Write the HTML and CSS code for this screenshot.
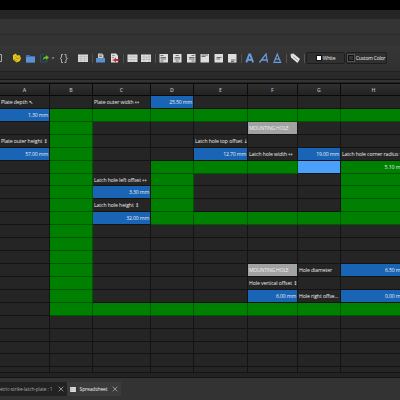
FILE: index.html
```
<!DOCTYPE html>
<html lang="en">
<head>
<meta charset="utf-8">
<title>Spreadsheet</title>
<link rel="stylesheet" href="styles.css">
</head>
<body>
<div class="app">
<div class="screen-top"></div>
<div class="menu"></div>
<div class="strip"></div>
<div class="toolbar">
<svg class="icons" width="306" height="26" viewBox="0 45 306 26">
  <path d="M0 54.500h1.500v7H0" fill="none" stroke="#aaa"/>
  <path d="M13 55l3-1.500 1 2 2.500-.5 1.500 3-1 3-3.500 1.500-3.500-3z" fill="#e6c71c"/><path d="M15.500 56l1.500 3 3-1.500M14 59l3 2" fill="none" stroke="#9a8210" stroke-width=".7"/>
  <path d="M26 55h3.500l1 1H35v6.500h-9z" fill="#3d73b5"/><path d="M26 57h9v5.500h-9z" fill="#5b92d6"/>
  <path d="M44 54.500h-3.500v7.500h6.500v-2" fill="none" stroke="#29506b"/><path d="M43 60c0-2.500 1.500-3.500 3-3.500V55l3 2.500-3 2.500v-1.500c-1.500 0-2 .5-3 1.500z" fill="#63c625"/>
  <path d="M51.500 57.500h3l-1.500 1.500z" fill="#aaa"/>
  <path d="M63 54.500h-1.500v3l-1.500 1 1.500 1v3H63M64.500 54.500H66v3l1.500 1-1.500 1v3h-1.500" fill="none" stroke="#bbb" stroke-width=".9"/>
  <path d="M78 54.500h10v7.500H78z" fill="#dedede"/><path d="M78 56.500h10M78 58.300h10M78 60.200h10M81 54.500v7.500M84.500 54.500v7.500" stroke="#aaa" stroke-width=".5"/>
  <path d="M92.500 54v9M123.500 54v9M155.500 54v9M241.500 54v9" stroke="#555" stroke-width=".8"/><path d="M286.500 54v9M304.500 54v9" stroke="#635b4d" stroke-width=".8"/>
  <path d="M98 53.500h4l1.500 1.500v4H98z" fill="#ccc"/><path d="M99 55h3M99 56.500h3" stroke="#555" stroke-width=".6"/><path d="M96 58h9v4.500h-9z" fill="#5b8fce"/>
  <path d="M111 53.500h5l2 2v7h-7z" fill="#dedede"/><path d="M112 55.500h3M112 57.500h2M112 60h2" stroke="#777" stroke-width=".7"/><path d="M113 60l3-2.500v1.500h2.500v2H116v1.500z" fill="#c22b3d"/>
  <path d="M127.500 54.500h10v7.500h-10zM141 54.500h10v7.500h-10z" fill="#dedede"/><path d="M127.500 57h10M127.500 59.500h10M131 54.500v2.500M134 54.500v2.500M131 59.500v2.500M134 59.500v2.500M141 57h10M141 59.500h10M144 54.500v7.500M146.500 57v2.500M149 54.500v7.500" stroke="#aaa" stroke-width=".6"/>
  <path d="M159.500 54h8.500v8.500h-8.500zM173 54h8.500v8.500H173zM187 54h8.500v8.500H187zM200.500 54h8.500v8.500h-8.500zM214.500 54h8.500v8.500h-8.500zM228 54h8.500v8.500H228z" fill="#dedede"/>
  <path d="M160.500 55.500h3M160.500 57.500h5.500M160.500 59h5.500M160.500 61h3M175.700 55.500h3M174.500 57.500h5.500M174.500 59h5.500M175.700 61h3M191.500 55.500h3M189 57.500h5.500M189 59h5.500M191.500 61h3M201.500 55h6.500M201.500 56.500h4M216.500 57.500h5M216.500 59h3.500M231 60h4.500M231 61.500h3" stroke="#707070" stroke-width="1"/>
  <g fill="none" stroke="#6b9bdc"><path d="M246.300 62.300L249.200 54.500h1l2.900 7.800M247.500 59.700h4.500" stroke-width="1.900"/><path d="M259.500 62.500l6.500-8.500 1.500 8.500M262 60h5" stroke-width="1.300"/><path d="M274.300 61.500l3-7.500 3 7.500M275.300 59.200h4M273.300 62.400h8" stroke-width="1.200"/></g>
  <path d="M290.500 54l3-.5 6.500 5.500-2.500 4-6.500-5.500z" fill="#e4e4e0"/><path d="M293 56.500l5 4M292 54.500l.8.800" stroke="#777" stroke-width=".7"/>
</svg>
<div class="pick white"><i class="swatch lit"></i><span>White</span></div>
<div class="pick custom"><i class="swatch"></i><span>Custom Color</span></div>
</div>
<div class="formula"></div>
<div class="heads"><b>A</b><b>B</b><b>C</b><b>D</b><b>E</b><b>F</b><b>G</b><b>H</b></div>
<div class="sheet" id="cells"></div>
<div class="scroll"></div>
<div class="tabs">
  <div class="tab first"><span>etric-strike-latch-plate : 1</span><svg width="6" height="6" viewBox="0 0 6 6"><path d="M.7.7l4.600 4.600M5.300.7L.7 5.300"/></svg></div>
  <div class="tab active"><svg class="mini" width="6" height="5" viewBox="0 0 7 6"><path class="page" d="M0 0h7v6H0z"/><path class="rule" d="M2 0v6M0 2h7M0 4h7"/></svg><span>Spreadsheet</span><svg width="6" height="6" viewBox="0 0 6 6"><path d="M.7.7l4.600 4.600M5.300.7L.7 5.300"/></svg></div>
</div>
</div>
<script src="sheet.js"></script>
</body>
</html>
```
FILE: styles.css
```
* { box-sizing: border-box; }
body { margin: 0; width: 400px; height: 400px; overflow: hidden; background: #333; font-family: "Open Sans", "Noto Sans", "DejaVu Sans", sans-serif; color: #eee; }
.app { width: 400px; height: 400px; overflow: hidden; display: flex; flex-direction: column; }
.app > * { flex: none; }
.screen-top { height: 10px; background: #000; }
.menu { height: 9px; background: #252525; }
.strip { height: 26px; background: linear-gradient(#343434 0 15px, #2c2c2c 15px 16px, #333 16px); }
.toolbar { height: 26px; display: flex; align-items: center; background: linear-gradient(#363636, #303030); }
.icons { flex: none; display: block; }
.pick { height: 12px; margin-top: 0; display: flex; align-items: center; justify-content: center; border: 1px solid #1d1d1d; border-radius: 2px; background: #303030; font-size: 5px; letter-spacing: -.2px; white-space: nowrap; }
.white { width: 39px; }
.custom { width: 41px; margin-left: 1px; }
.swatch { width: 6px; height: 6px; border: 1px solid #111; outline: .5px solid #555; margin-right: 1px; background: #333; }
.swatch.lit { background: #fff; outline: 0; }
.custom .swatch { margin-right: 2px; }
.formula { height: 12px; background: linear-gradient(#222 0 1px, #292929 1px 8px, #151515 8px 9px, #333 9px 11px, #222 11px); }
.heads, .sheet { display: grid; grid-template-columns: 50px 43px 58px 43px 54px 50px 43px 66px; width: 407px; }
.heads { height: 13px; background: linear-gradient(#303030, #222); border-top: 1px solid #090909; border-bottom: 1px solid #090909; }
.heads b { border-right: 1px solid #0b0b0b; font-size: 5.200px; line-height: 12px; text-align: center; font-weight: 600; color: #bbb; }
.sheet { height: 276px; overflow: hidden; grid-template-rows: repeat(22, 12.930px); background: #252525; }
.cell { overflow: hidden; border-right: 1px solid #131313; border-bottom: 1px solid #131313; padding: 0 1px; font-size: 5.150px; line-height: 12.500px; white-space: nowrap; letter-spacing: -.09px; }
.blue { background: #1964b4; text-align: right; letter-spacing: -.16px; }
.green { background: #008000; border-color: #005500; text-align: right; }
.gray { background: #a2a2a2; color: #eee; letter-spacing: -.26px; }
.selected { background: #4aa0fa; }
.scroll { height: 6px; background: #222; border-top: 1px solid #151515; border-bottom: 1px solid #151515; }
.tabs { height: 22px; background: #333; display: flex; align-items: flex-start; padding-top: 4px; }
.tab { height: 14px; display: flex; align-items: center; font-size: 5px; white-space: nowrap; }
.tab path { stroke: #aaa; stroke-width: .8; }
.tab .page { fill: #ddd; stroke: none; }
.tab .rule { stroke: #bbb; stroke-width: .5; }
.first { width: 67px; background: #222; color: #aaa; justify-content: space-between; padding-right: 3px; font-size: 4.700px; letter-spacing: -.06px; }
.active { width: 54px; background: #3b3b3b; padding: 0 3px; justify-content: space-between; letter-spacing: -.13px; }
.active span { margin-right: 1px; }
```
FILE: sheet.js
```
const text = {
  A0: "Plate depth ↖", C0: "Plate outer width ↔", D0: "25.50 mm",
  A1: "1.30 mm", F2: "MOUNTING HOLE",
  A3: "Plate outer height ↕", E3: "Latch hole top offset ↓",
  A4: "57.00 mm", E4: "12.70 mm", F4: "Latch hole width ↔", G4: "19.00 mm", H4: "Latch hole corner radius ↖",
  H5: "5.10 mm", C6: "Latch hole left offset ↔", C7: "3.30 mm", C8: "Latch hole height ↕", C9: "32.00 mm",
  F13: "MOUNTING HOLE", G13: "Hole diameter", H13: "6.50 mm",
  F14: "Hole vertical offset ↕", F15: "6.00 mm", G15: "Hole right offse...", H15: "0.00 mm"
};
const kinds = {
  blue: ["D0", "A1", "A4", "E4", "G4", "C7", "C9", "H13", "F15", "H15"],
  gray: ["F2", "F13"],
  selected: ["G5"],
  green: ["D5", "E5", "F5", "H5", "D6", "H6", "D7", "H7", "D8", "H8", "D9", "E9", "F9", "G9", "H9"]
};
for (const c of "BCDEFGH") kinds.green.push(c + 1, c + 16);
for (let r = 2; r < 16; r++) kinds.green.push("B" + r);
const sheet = document.getElementById("cells");
for (let r = 0; r < 22; r++) {
  for (const c of "ABCDEFGH") {
    const cell = document.createElement("div");
    cell.className = "cell";
    for (const k in kinds) if (kinds[k].includes(c + r)) cell.classList.add(k);
    cell.textContent = text[c + r] || "";
    sheet.append(cell);
  }
}
```
